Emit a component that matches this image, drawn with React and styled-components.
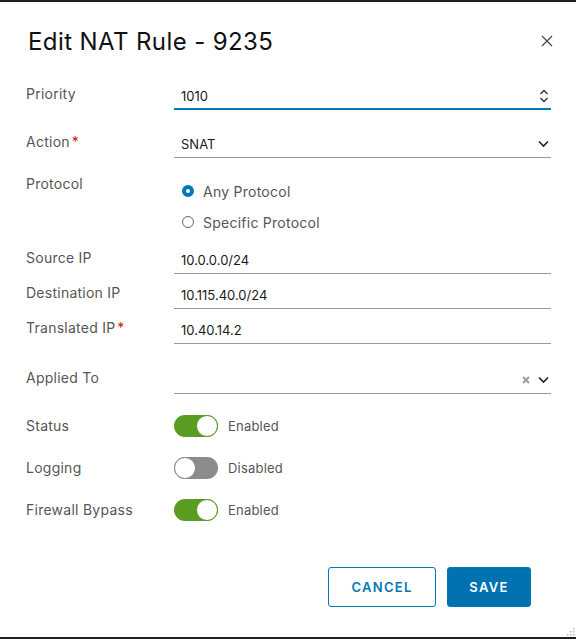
import React from "react";
import styled, { createGlobalStyle } from "styled-components";

const GlobalStyle = createGlobalStyle`
  html, body {
    margin: 0;
    padding: 0;
    background: #1f1f1f;
    font-family: Inter, "Noto Sans", "DejaVu Sans", sans-serif;
  }
`;

const Dialog = styled.div`
  position: relative;
  box-sizing: border-box;
  margin-top: 2px;
  width: 576px;
  height: 635px;
  background: #fff;
  padding: 24px 25px 0 26px;
`;

const Header = styled.div`
  display: flex;
  align-items: center;
  justify-content: space-between;
  height: 30px;
  padding-left: 2px;
`;

const Title = styled.h1`
  margin: 0;
  font-size: 24px;
  font-weight: 400;
  color: #111;
  letter-spacing: 0.4px;
`;

const CloseButton = styled.button`
  display: flex;
  align-items: center;
  justify-content: center;
  width: 20px;
  height: 20px;
  margin-right: -6px;
  padding: 0;
  border: none;
  background: none;
  color: #454545;
`;

const Form = styled.div`
  display: flex;
  flex-direction: column;
`;

const Row = styled.div`
  display: grid;
  grid-template-columns: 148px 1fr;
  align-items: ${(p) => (p.$center ? "center" : "start")};
  margin-top: ${(p) => p.$gap || "0px"};
`;

const Label = styled.div`
  font-size: 14px;
  line-height: 20px;
  color: #565656;
  letter-spacing: 0.25px;
  white-space: nowrap;
`;

const Required = styled.span`
  color: #c92100;
  margin-left: 2px;
`;

const Field = styled.div`
  box-sizing: border-box;
  display: flex;
  align-items: flex-start;
  height: 26px;
  padding: 2px 2px 0 7px;
  border-bottom: ${(p) => (p.$focus ? "2px solid #0079b8" : "1px solid #9a9a9a")};
`;

const Value = styled.span`
  flex: 1;
  font-size: 13px;
  line-height: 20px;
  color: #1a1a1a;
`;

const FieldIcons = styled.span`
  display: flex;
  align-items: center;
  gap: 8px;
  height: 20px;
  color: #333;
`;

const RadioGroup = styled.div`
  display: flex;
  flex-direction: column;
  gap: 11px;
  padding: 7px 0 0 8px;
`;

const RadioItem = styled.label`
  display: flex;
  align-items: center;
  gap: 9px;
  height: 20px;
  font-size: 14px;
  letter-spacing: 0.25px;
  color: #565656;
`;

const RadioDot = styled.span`
  box-sizing: border-box;
  width: 12px;
  height: 12px;
  border-radius: 50%;
  background: #fff;
  border: ${(p) => (p.$checked ? "4px solid #0079b8" : "1px solid #666")};
`;

const ToggleWrap = styled.div`
  display: flex;
  align-items: center;
  gap: 10px;
`;

const Track = styled.span`
  box-sizing: border-box;
  display: flex;
  justify-content: ${(p) => (p.$on ? "flex-end" : "flex-start")};
  width: 44px;
  height: 22px;
  border-radius: 11px;
  background: ${(p) => (p.$on ? "#5a9c20" : "#8c8c8c")};
`;

const Knob = styled.span`
  box-sizing: border-box;
  width: 22px;
  height: 22px;
  border-radius: 50%;
  background: #fff;
  border: 1px solid ${(p) => (p.$on ? "#5a9c20" : "#8c8c8c")};
`;

const ToggleText = styled.span`
  font-size: 13px;
  letter-spacing: 0.2px;
  color: #565656;
`;

const Footer = styled.div`
  display: flex;
  justify-content: flex-end;
  gap: 11px;
  margin-top: 46px;
  padding-right: 20px;
`;

const Button = styled.button`
  box-sizing: border-box;
  width: ${(p) => p.$width};
  height: 40px;
  border-radius: 3px;
  border: 1px solid #0079b8;
  background: ${(p) => (p.$primary ? "#0072b0" : "#fff")};
  color: ${(p) => (p.$primary ? "#fff" : "#0079b8")};
  font-family: inherit;
  font-size: 13px;
  font-weight: 600;
  letter-spacing: 1.3px;
  text-transform: uppercase;
`;

const Grip = styled.svg`
  position: absolute;
  right: 1px;
  bottom: 1px;
`;

const CloseIcon = () => (
  <svg width="12" height="12" viewBox="0 0 12 12">
    <path d="M1 1 L11 11 M11 1 L1 11" stroke="currentColor" strokeWidth="1.2" fill="none" />
  </svg>
);

const Spinner = () => (
  <svg width="10" height="14" viewBox="0 0 10 14">
    <path d="M1.5 5 L5 1.5 L8.5 5 M1.5 9 L5 12.5 L8.5 9" stroke="#333" strokeWidth="1.4" fill="none" />
  </svg>
);

const Chevron = () => (
  <svg width="11" height="8" viewBox="0 0 11 8">
    <path d="M1 1.5 L5.5 6 L10 1.5" stroke="#222" strokeWidth="1.6" fill="none" />
  </svg>
);

const ClearIcon = () => (
  <svg width="8" height="8" viewBox="0 0 8 8">
    <path d="M1 1 L7 7 M7 1 L1 7" stroke="#9a9a9a" strokeWidth="1.8" fill="none" />
  </svg>
);

const Toggle = ({ on }) => (
  <ToggleWrap>
    <Track $on={on}>
      <Knob $on={on} />
    </Track>
    <ToggleText>{on ? "Enabled" : "Disabled"}</ToggleText>
  </ToggleWrap>
);

export default function App() {
  return (
    <>
      <GlobalStyle />
      <Dialog>
        <Header>
          <Title>Edit NAT Rule - 9235</Title>
          <CloseButton aria-label="Close">
            <CloseIcon />
          </CloseButton>
        </Header>

        <Form>
          <Row $gap="28px">
            <Label>Priority</Label>
            <Field $focus>
              <Value>1010</Value>
              <FieldIcons>
                <Spinner />
              </FieldIcons>
            </Field>
          </Row>

          <Row $gap="22px">
            <Label>
              Action<Required>*</Required>
            </Label>
            <Field>
              <Value>SNAT</Value>
              <FieldIcons>
                <Chevron />
              </FieldIcons>
            </Field>
          </Row>

          <Row $gap="16px">
            <Label>Protocol</Label>
            <RadioGroup>
              <RadioItem>
                <RadioDot $checked />
                Any Protocol
              </RadioItem>
              <RadioItem>
                <RadioDot />
                Specific Protocol
              </RadioItem>
            </RadioGroup>
          </Row>

          <Row $gap="16px">
            <Label>Source IP</Label>
            <Field>
              <Value>10.0.0.0/24</Value>
            </Field>
          </Row>

          <Row $gap="9px">
            <Label>Destination IP</Label>
            <Field>
              <Value>10.115.40.0/24</Value>
            </Field>
          </Row>

          <Row $gap="9px">
            <Label>
              Translated IP<Required>*</Required>
            </Label>
            <Field>
              <Value>10.40.14.2</Value>
            </Field>
          </Row>

          <Row $gap="24px">
            <Label>Applied To</Label>
            <Field>
              <Value />
              <FieldIcons>
                <ClearIcon />
                <Chevron />
              </FieldIcons>
            </Field>
          </Row>

          <Row $gap="21px" $center>
            <Label>Status</Label>
            <Toggle on />
          </Row>

          <Row $gap="20px" $center>
            <Label>Logging</Label>
            <Toggle on={false} />
          </Row>

          <Row $gap="20px" $center>
            <Label>Firewall Bypass</Label>
            <Toggle on />
          </Row>
        </Form>

        <Footer>
          <Button $width="108px">Cancel</Button>
          <Button $width="84px" $primary>
            Save
          </Button>
        </Footer>

        <Grip width="8" height="8" viewBox="0 0 8 8">
          <rect x="6" y="0" width="1.5" height="1.5" fill="#bbb" />
          <rect x="3" y="3" width="1.5" height="1.5" fill="#bbb" />
          <rect x="6" y="3" width="1.5" height="1.5" fill="#bbb" />
          <rect x="0" y="6" width="1.5" height="1.5" fill="#bbb" />
          <rect x="3" y="6" width="1.5" height="1.5" fill="#bbb" />
          <rect x="6" y="6" width="1.5" height="1.5" fill="#bbb" />
        </Grip>
      </Dialog>
    </>
  );
}
